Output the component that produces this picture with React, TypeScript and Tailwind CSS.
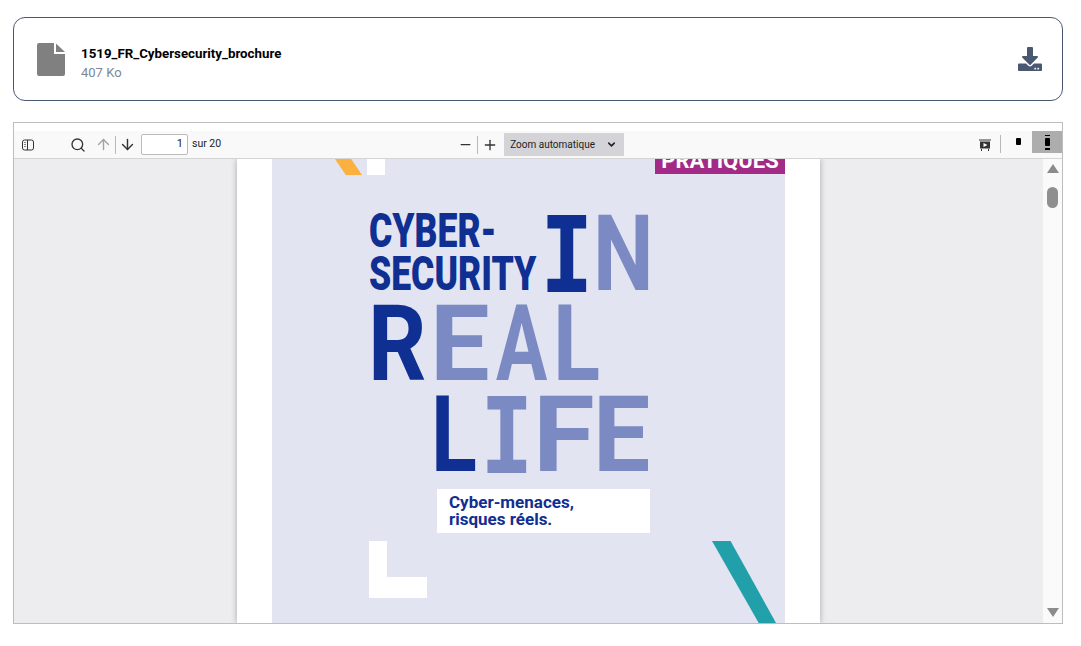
import { ArrowDown, ArrowUp, ChevronDown, Minus, Plus, Search } from "lucide-react";
import { FaDownload } from "react-icons/fa";

type PosterLetter = {
  char: string;
  className: string;
};

const dark = "text-[#0f2f92]";
const light = "text-[#7b8ac3]";
const slab = "font-['DejaVu_Sans_Mono'] text-[100px]";

// Big title of the cover, each letter placed on the poster by hand
const letters: PosterLetter[] = [
  { char: "I", className: `left-[268px] top-[44px] ${dark} ${slab} scale-x-[0.84]` },
  { char: "N", className: `left-[321px] top-[42px] ${light} scale-x-[0.81]` },
  { char: "R", className: `left-[96px] top-[132px] ${dark} text-[105px] scale-x-[0.86]` },
  { char: "E", className: `left-[158px] top-[132px] ${light} text-[105px] scale-x-[1]` },
  { char: "A", className: `left-[224px] top-[132px] ${light} text-[105px] scale-x-[0.72]` },
  { char: "L", className: `left-[281px] top-[132px] ${light} text-[105px] scale-x-[0.82]` },
  { char: "L", className: `left-[159px] top-[223px] ${dark} text-[105px] scale-x-[0.8]` },
  { char: "I", className: `left-[208px] top-[225px] ${light} ${slab} scale-x-[0.84]` },
  { char: "F", className: `left-[261px] top-[223px] ${light} text-[105px] scale-x-[1.06]` },
  { char: "E", className: `left-[321px] top-[223px] ${light} text-[105px] scale-x-[0.96]` },
];

const Poster = () => (
  <div className="relative h-full w-[513px] overflow-hidden bg-[#e2e4f2] font-['Roboto',sans-serif]">
    {/* Top leftovers of the previous shapes */}
    <div className="absolute left-[63px] top-0 h-[16px] w-[27px] bg-[#fbb040] [clip-path:polygon(0_0,60%_0,100%_100%,40%_100%)]" />
    <div className="absolute left-[95px] top-0 h-[16px] w-[18px] bg-white" />
    <div className="absolute left-[383px] top-0 flex h-[15px] w-[130px] justify-center overflow-hidden bg-[#a32a86]">
      <span className="-mt-[9px] text-[22px] font-bold leading-[22px] text-white">PRATIQUES</span>
    </div>

    {/* Title */}
    <div className={`absolute left-[97px] top-[50px] origin-top-left scale-x-[0.74] text-[48px] font-black leading-[43px] ${dark}`}>
      <div>CYBER-</div>
      <div>SECURITY</div>
    </div>
    {letters.map((letter, i) => (
      <span
        key={i}
        className={`absolute origin-left text-[106px] font-bold leading-[106px] ${letter.className}`}>
        {letter.char}
      </span>
    ))}

    {/* Subtitle */}
    <div className="absolute left-[165px] top-[330px] h-[44px] w-[213px] bg-white pl-[12px] pt-[5px] text-[17px] font-bold leading-[17px] text-[#0f2f92]">
      <div>Cyber-menaces,</div>
      <div>risques réels.</div>
    </div>

    {/* Corner shapes */}
    <div className="absolute left-[97px] top-[382px] h-[57px] w-[58px]">
      <div className="h-[36px] w-[18px] bg-white" />
      <div className="h-[21px] w-full bg-white" />
    </div>
    <div className="absolute left-[440px] top-[382px] h-[82px] w-[64px] bg-[#22a0a9] [clip-path:polygon(0_0,29%_0,100%_100%,73%_100%)]" />
  </div>
);

const SidebarIcon = () => (
  <svg width="14" height="14" viewBox="0 0 14 14" fill="none" stroke="#333" strokeWidth="1">
    <rect x="1.5" y="2" width="11" height="10" rx="2" />
    <path d="M6.5 2v10" />
    <path d="M3 4.5h2M3 6.5h2M3 8.5h2" stroke="#888" />
  </svg>
);

const PresentationIcon = () => (
  <svg width="14" height="14" viewBox="0 0 14 14">
    <path d="M1 1.5h12v1H1z" fill="#333" />
    <path d="M2 3.5h10v7H2z" fill="#333" />
    <path d="M5.5 5l4 2-4 2z" fill="#fff" />
    <path d="M3.5 11v2M10.5 11v2" stroke="#333" />
  </svg>
);

const Toolbar = () => (
  <div className="mt-2 flex h-[27px] items-start bg-[#f9f9fa] text-[11px] text-[#222]">
    <div className="flex h-full items-center pl-[7px]">
      <SidebarIcon />
    </div>
    <div className="flex h-full items-center pl-[35px]">
      <Search size={16} strokeWidth={2} className="text-[#333]" />
    </div>
    <div className="flex h-full items-center pl-[9px]">
      <ArrowUp size={17} strokeWidth={2} className="text-[#a3a3a3]" />
      <div className="ml-[3px] h-[18px] w-px bg-[#b8b8b8]" />
      <ArrowDown size={17} strokeWidth={2} className="ml-[3px] text-[#333]" />
    </div>
    <div className="ml-[5px] mt-[3px] flex h-[21px] w-[47px] items-center justify-end rounded-[2px] border border-[#bbb] bg-white pr-[4px] text-[11px]">
      1
    </div>
    <div className="ml-[4px] flex h-[26px] items-center text-[10.5px]">sur 20</div>

    <div className="ml-[237px] flex h-full items-center">
      <Minus size={15} strokeWidth={2} className="text-[#333]" />
      <div className="ml-[4px] h-[18px] w-px bg-[#b8b8b8]" />
      <Plus size={16} strokeWidth={2} className="ml-[4px] text-[#333]" />
    </div>
    <div className="ml-[6px] mt-[2px] flex h-[23px] w-[120px] items-center justify-between bg-[#d4d4d8] pl-[6px] pr-[7px]">
      <span className="text-[10px]">Zoom automatique</span>
      <ChevronDown size={11} strokeWidth={3.5} className="text-[#222]" />
    </div>

    <div className="ml-auto flex h-full items-start">
      <div className="mt-[6px] flex h-[16px] items-center">
        <PresentationIcon />
      </div>
      <div className="ml-[8px] mt-[4px] h-[18px] w-px bg-[#b8b8b8]" />
      <div className="ml-[15px] mt-[7px] h-[7px] w-[5px] rounded-[1px] bg-black" />
      <div className="ml-[11px] flex h-[22px] w-[30px] items-center justify-center bg-[#adadad]">
        <div className="flex h-[15px] w-[5px] flex-col items-center justify-between">
          <div className="h-[1.5px] w-[5px] bg-black" />
          <div className="h-[8px] w-[5px] rounded-[1px] bg-black" />
          <div className="h-[1.5px] w-[5px] bg-black" />
        </div>
      </div>
    </div>
  </div>
);

const Scrollbar = () => (
  <div className="flex h-full w-[19px] shrink-0 flex-col items-center bg-[#fafafa] pb-[6px] pt-[5px]">
    <div className="h-0 w-0 border-x-[6.5px] border-b-[9px] border-x-transparent border-b-[#8b8b8b]" />
    <div className="mt-[14px] h-[21px] w-[11px] rounded-full bg-[#8f8f8f]" />
    <div className="mt-auto h-0 w-0 border-x-[6.5px] border-t-[9px] border-x-transparent border-t-[#8b8b8b]" />
  </div>
);

export default function App() {
  return (
    <div className="h-[646px] w-[1081px] overflow-hidden bg-white pl-[13px] pr-[18px] pt-[17px] font-['Roboto',sans-serif]">
      {/* File card */}
      <div className="flex h-[84px] items-center justify-between rounded-[12px] border border-[#4a5872] pl-[23px] pr-[20px]">
        <div className="flex items-center gap-[16px]">
          <svg width="28" height="33" viewBox="0 0 28 33" fill="#808080">
            <path d="M2 0h15v11h11v20a2 2 0 0 1-2 2H2a2 2 0 0 1-2-2V2a2 2 0 0 1 2-2z" />
            <path d="M19 0.5L28 9h-9z" />
          </svg>
          <div className="pt-[9px]">
            <div className="text-[13.3px] font-bold leading-[18px] text-black">1519_FR_Cybersecurity_brochure</div>
            <div className="mt-[1px] text-[13px] leading-[18px] text-[#7d8797]">407 Ko</div>
          </div>
        </div>
        <FaDownload size={24} className="text-[#4a5872]" />
      </div>

      {/* PDF viewer */}
      <div className="mt-[21px] h-[502px] border border-[#bdbdbd]">
        <Toolbar />
        <div className="flex h-[465px] border-t border-[#d4d4d4] bg-[#ededf0]">
          <div className="flex min-w-0 flex-1 justify-center overflow-hidden">
            <div className="flex h-full w-[583px] justify-center bg-white shadow-[0_0_6px_rgba(0,0,0,0.3)]">
              <Poster />
            </div>
          </div>
          <Scrollbar />
        </div>
      </div>
    </div>
  );
}
